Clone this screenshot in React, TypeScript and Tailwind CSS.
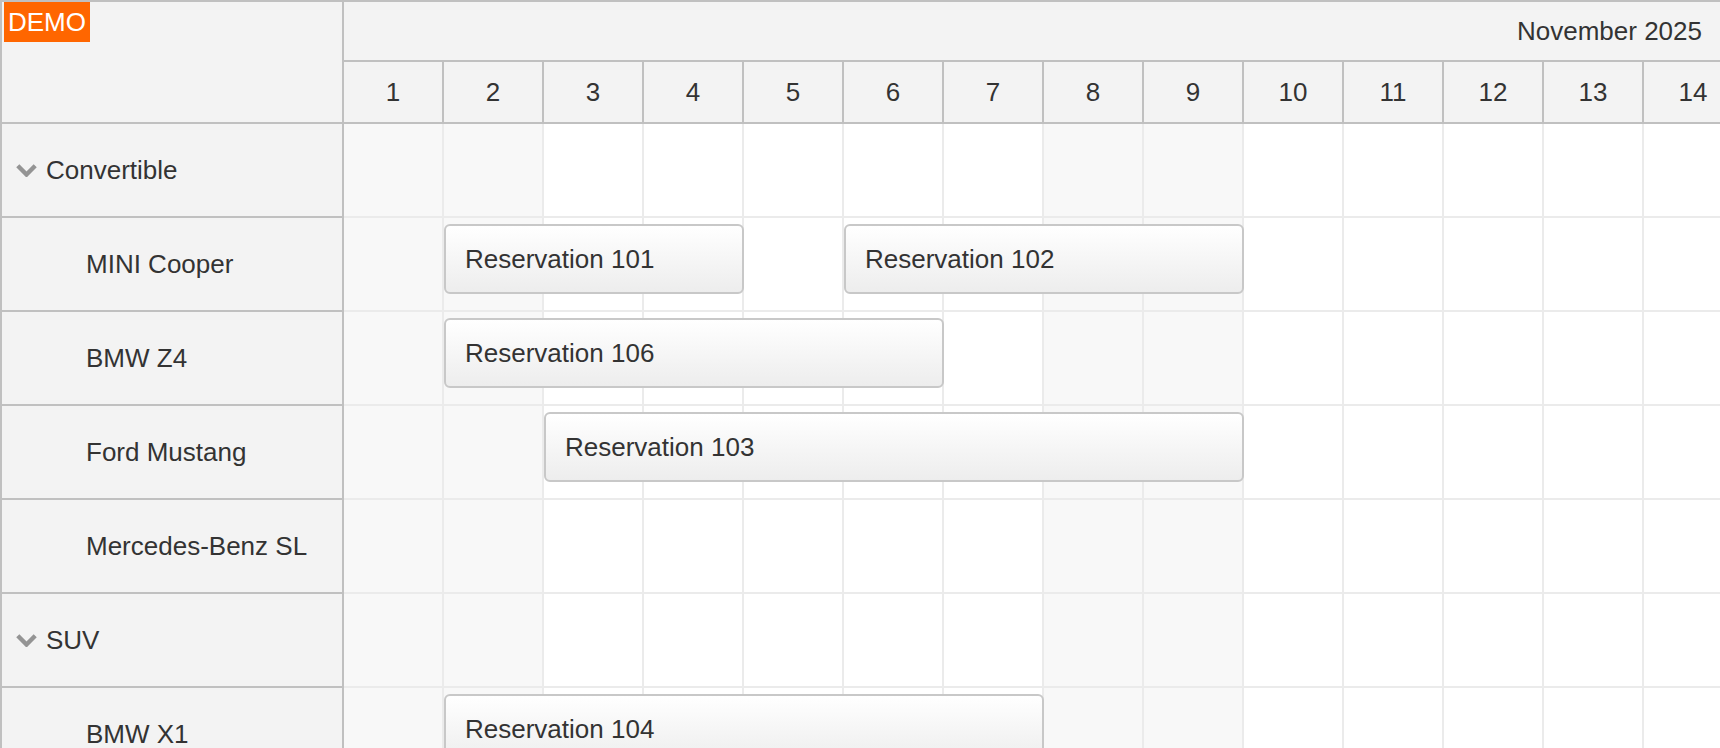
import React from "react";

type Row = { name: string; group?: boolean };
type Booking = { row: number; start: number; days: number; text: string };

const rows: Row[] = [
  { name: "Convertible", group: true },
  { name: "MINI Cooper" },
  { name: "BMW Z4" },
  { name: "Ford Mustang" },
  { name: "Mercedes-Benz SL" },
  { name: "SUV", group: true },
  { name: "BMW X1" },
];

const bookings: Booking[] = [
  { row: 1, start: 2, days: 3, text: "Reservation 101" },
  { row: 1, start: 6, days: 4, text: "Reservation 102" },
  { row: 2, start: 2, days: 5, text: "Reservation 106" },
  { row: 3, start: 3, days: 7, text: "Reservation 103" },
  { row: 6, start: 2, days: 6, text: "Reservation 104" },
];

const days = Array.from({ length: 14 }, (_, i) => i + 1);
// November 2025 starts on a Saturday
const isWeekend = (d: number) => d % 7 === 1 || d % 7 === 2;

function Chevron() {
  return (
    <svg width="21" height="13" viewBox="0 0 21 13" className="shrink-0">
      <path d="M1.8 1.8 L10.5 10.5 L19.2 1.8" fill="none" stroke="#949494" strokeWidth="4.4" />
    </svg>
  );
}

export default function App() {
  return (
    <div className="relative h-[748px] w-[1720px] overflow-hidden bg-white font-['Liberation_Sans',Arial,sans-serif] text-[26px] text-[#333]">
      <div className="flex border-t-2 border-l-2 border-[#c0c0c0]">
        {/* resource column */}
        <div className="w-[342px] shrink-0 border-r-2 border-[#c0c0c0] bg-[#f3f3f3]">
          <div className="h-[122px] border-b-2 border-[#c0c0c0]" />
          {rows.map((r) => (
            <div
              key={r.name}
              className={
                r.group
                  ? "flex h-[94px] items-center gap-[9px] border-b-2 border-[#c0c0c0] pl-[14px]"
                  : "flex h-[94px] items-center border-b-2 border-[#c0c0c0] pl-[84px]"
              }
            >
              {r.group && <Chevron />}
              <span>{r.name}</span>
            </div>
          ))}
        </div>

        {/* timeline */}
        <div className="min-w-0 flex-1 overflow-hidden">
          <div className="flex h-[60px] items-center justify-end border-b-2 border-[#c0c0c0] bg-[#f3f3f3] pr-[18px]">
            November 2025
          </div>
          <div className="flex h-[62px] border-b-2 border-[#c0c0c0] bg-[#f3f3f3]">
            {days.map((d) => (
              <div
                key={d}
                className="flex w-[100px] shrink-0 items-center justify-center border-r-2 border-[#c0c0c0]"
              >
                {d}
              </div>
            ))}
          </div>
          {rows.map((r, ri) => (
            <div key={r.name} className="relative flex h-[94px]">
              {days.map((d) => (
                <div
                  key={d}
                  className={
                    isWeekend(d)
                      ? "w-[100px] shrink-0 border-r-2 border-b-2 border-[#ebebeb] bg-[#f8f8f8]"
                      : "w-[100px] shrink-0 border-r-2 border-b-2 border-[#ebebeb] bg-white"
                  }
                />
              ))}
              {bookings
                .filter((b) => b.row === ri)
                .map((b) => (
                  <div
                    key={b.text}
                    className="absolute top-[6px] flex h-[70px] items-center rounded-[6px] border-2 border-[#c8c8c8] bg-gradient-to-b from-white to-[#ededed] pl-[19px]"
                    style={{ left: (b.start - 1) * 100, width: b.days * 100 }}
                  >
                    {b.text}
                  </div>
                ))}
            </div>
          ))}
        </div>
      </div>

      <div className="absolute top-[2px] left-[4px] flex h-[40px] w-[86px] items-center justify-center bg-[#ff6600] text-white">
        DEMO
      </div>
    </div>
  );
}
